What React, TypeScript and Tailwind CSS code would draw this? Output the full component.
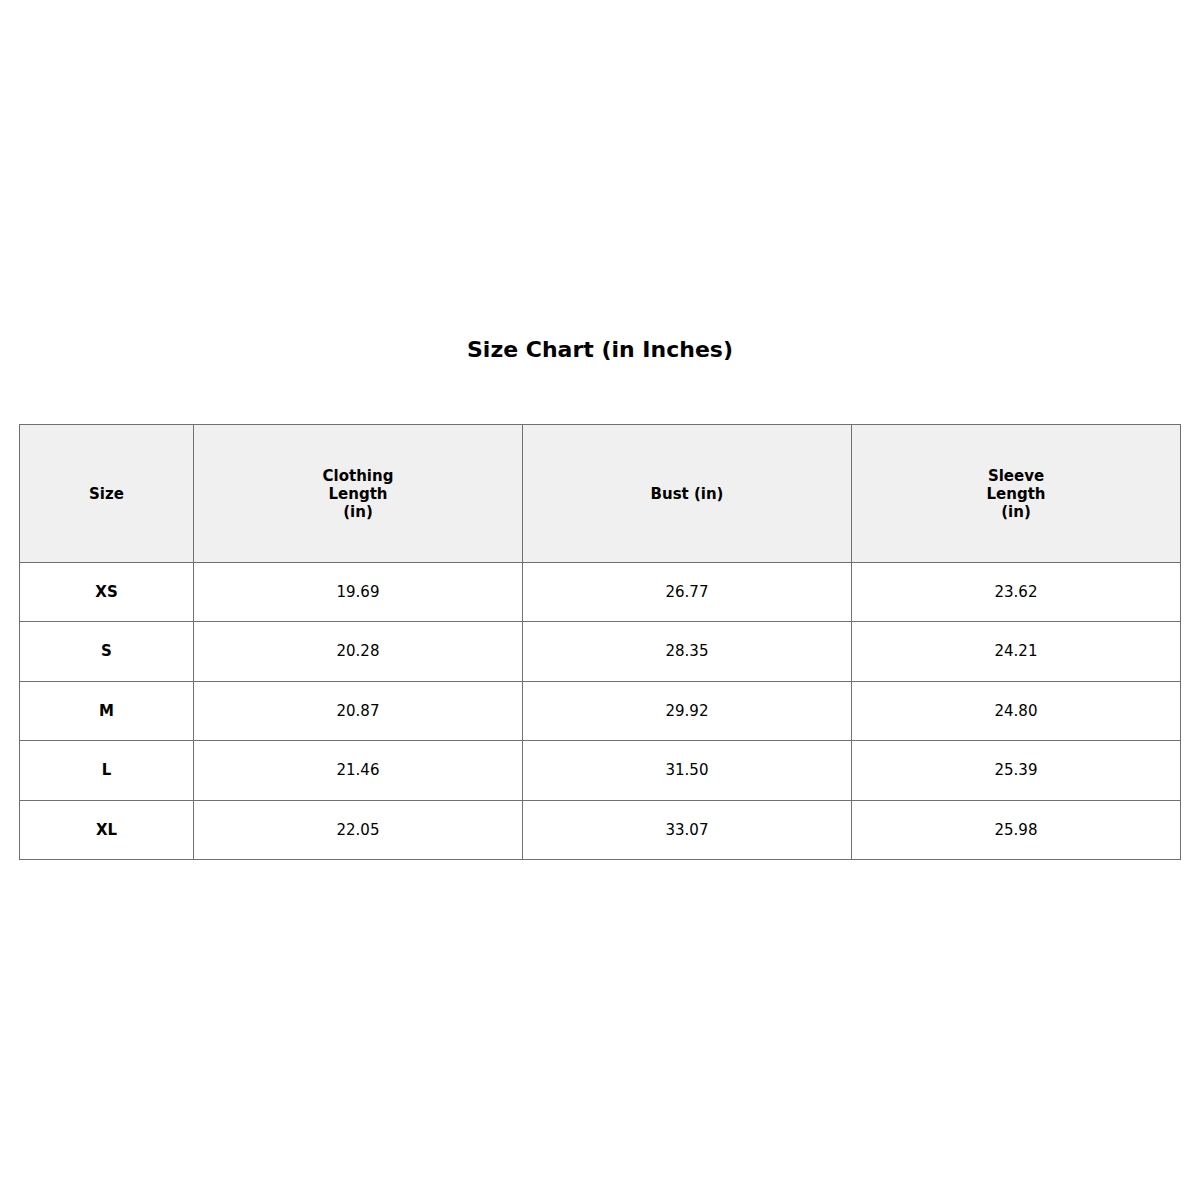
const headers = [
  { label: ["Size"], width: "w-[174px]" },
  { label: ["Clothing", "Length", "(in)"], width: "w-[329px]" },
  { label: ["Bust (in)"], width: "w-[329px]" },
  { label: ["Sleeve", "Length", "(in)"], width: "w-[329px]" },
];

const rows = [
  ["XS", "19.69", "26.77", "23.62"],
  ["S", "20.28", "28.35", "24.21"],
  ["M", "20.87", "29.92", "24.80"],
  ["L", "21.46", "31.50", "25.39"],
  ["XL", "22.05", "33.07", "25.98"],
];

export default function App() {
  return (
    <div className="w-[1200px] h-[1200px] bg-white px-[19px] pt-[337px] font-['DejaVu_Sans',sans-serif] text-black">
      <h1 className="text-center text-[22px] leading-[26px] font-bold mb-[61px]">
        Size Chart (in Inches)
      </h1>

      <table className="w-[1162px] border-collapse table-fixed text-[15px]">
        <thead>
          <tr className="bg-[#f0f0f0]">
            {headers.map((h) => (
              <th
                key={h.label.join(" ")}
                className={`${h.width} h-[138px] border border-[#707070] text-center align-middle font-bold leading-[18px]`}
              >
                {h.label.map((line) => (
                  <div key={line}>{line}</div>
                ))}
              </th>
            ))}
          </tr>
        </thead>
        <tbody>
          {rows.map((row) => (
            <tr key={row[0]}>
              {row.map((cell, i) => (
                <td
                  key={i}
                  className={`h-[59.4px] border border-[#707070] text-center align-middle ${
                    i === 0 ? "font-bold" : ""
                  }`}
                >
                  {cell}
                </td>
              ))}
            </tr>
          ))}
        </tbody>
      </table>
    </div>
  );
}
